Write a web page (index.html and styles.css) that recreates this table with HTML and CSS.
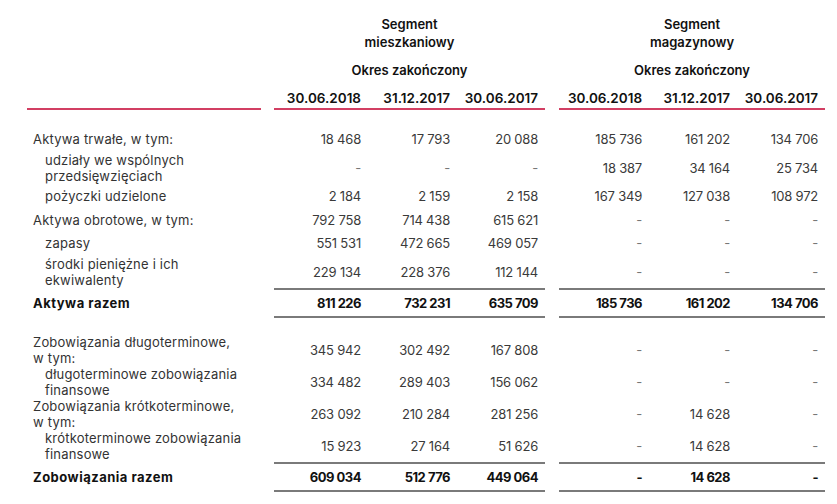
FILE: index.html
```html
<!DOCTYPE html>
<html lang="pl">
<head>
<meta charset="utf-8">
<title>Segmenty</title>
<link rel="stylesheet" href="styles.css">
</head>
<body>
<table class="fin">
  <colgroup>
    <col class="c-label"><col class="c-gap1"><col class="c-n1"><col class="c-n2"><col class="c-n3"><col class="c-gap2"><col class="c-n4"><col class="c-n5"><col class="c-n6">
  </colgroup>
  <thead>
    <tr class="h-seg">
      <th></th><th></th>
      <th colspan="3"><span class="ln">Segment</span><span class="ln">mieszkaniowy</span></th>
      <th></th>
      <th colspan="3"><span class="ln">Segment</span><span class="ln">magazynowy</span></th>
    </tr>
    <tr class="h-okres">
      <th></th><th></th>
      <th colspan="3">Okres zakończony</th>
      <th></th>
      <th colspan="3">Okres zakończony</th>
    </tr>
    <tr class="h-dates">
      <th class="rl"></th><th></th>
      <th class="rl">30.06.2018</th><th class="rl">31.12.2017</th><th class="rl">30.06.2017</th>
      <th></th>
      <th class="rl">30.06.2018</th><th class="rl">31.12.2017</th><th class="rl">30.06.2017</th>
    </tr>
  </thead>
  <tbody>
    <tr class="sp17"><td colspan="9"></td></tr>
    <tr class="s"><td class="lab">Aktywa trwałe, w tym:</td><td></td><td>18 468</td><td>17 793</td><td>20 088</td><td></td><td>185 736</td><td>161 202</td><td>134 706</td></tr>
    <tr class="d"><td class="lab sub"><span class="ln">udziały we wspólnych</span><span class="ln">przedsięwzięciach</span></td><td></td><td class="dash">-</td><td class="dash">-</td><td class="dash">-</td><td></td><td>18 387</td><td>34 164</td><td>25 734</td></tr>
    <tr class="s"><td class="lab sub">pożyczki udzielone</td><td></td><td>2 184</td><td>2 159</td><td>2 158</td><td></td><td>167 349</td><td>127 038</td><td>108 972</td></tr>
    <tr class="s s23"><td class="lab">Aktywa obrotowe, w tym:</td><td></td><td>792 758</td><td>714 438</td><td>615 621</td><td></td><td class="dash">-</td><td class="dash">-</td><td class="dash">-</td></tr>
    <tr class="s"><td class="lab sub">zapasy</td><td></td><td>551 531</td><td>472 665</td><td>469 057</td><td></td><td class="dash">-</td><td class="dash">-</td><td class="dash">-</td></tr>
    <tr class="d"><td class="lab sub"><span class="ln">środki pieniężne i ich</span><span class="ln">ekwiwalenty</span></td><td></td><td>229 134</td><td>228 376</td><td>112 144</td><td></td><td class="dash">-</td><td class="dash">-</td><td class="dash">-</td></tr>
    <tr class="tot"><td class="lab">Aktywa razem</td><td></td><td class="tl">811 226</td><td class="tl">732 231</td><td class="tl">635 709</td><td></td><td class="tl">185 736</td><td class="tl">161 202</td><td class="tl">134 706</td></tr>
    <tr class="sp16"><td colspan="9"></td></tr>
    <tr class="l"><td class="lab"><span class="ln">Zobowiązania długoterminowe,</span><span class="ln">w tym:</span></td><td></td><td>345 942</td><td>302 492</td><td>167 808</td><td></td><td class="dash">-</td><td class="dash">-</td><td class="dash">-</td></tr>
    <tr class="l"><td class="lab sub"><span class="ln">długoterminowe zobowiązania</span><span class="ln">finansowe</span></td><td></td><td>334 482</td><td>289 403</td><td>156 062</td><td></td><td class="dash">-</td><td class="dash">-</td><td class="dash">-</td></tr>
    <tr class="l"><td class="lab"><span class="ln">Zobowiązania krótkoterminowe,</span><span class="ln">w tym:</span></td><td></td><td>263 092</td><td>210 284</td><td>281 256</td><td></td><td class="dash">-</td><td>14 628</td><td class="dash">-</td></tr>
    <tr class="l"><td class="lab sub"><span class="ln">krótkoterminowe zobowiązania</span><span class="ln">finansowe</span></td><td></td><td>15 923</td><td>27 164</td><td>51 626</td><td></td><td class="dash">-</td><td>14 628</td><td class="dash">-</td></tr>
    <tr class="tot"><td class="lab">Zobowiązania razem</td><td></td><td class="tl">609 034</td><td class="tl">512 776</td><td class="tl">449 064</td><td></td><td class="tl">-</td><td class="tl">14 628</td><td class="tl">-</td></tr>
  </tbody>
</table>
</body>
</html>
```

FILE: styles.css
```css
html, body {
  margin: 0;
  padding: 0;
  background: #ffffff;
}

body {
  font-family: Inter, "Open Sans", "Liberation Sans", sans-serif;
  font-size: 13px;
  color: #3a3a3a;
}

.fin {
  margin: 15px 0 0 27px;
  border-collapse: separate;
  border-spacing: 0;
  table-layout: fixed;
  width: 798px;
}

.c-label { width: 234px; }
.c-gap1 { width: 13px; }
.c-n1 { width: 94px; }
.c-n2 { width: 89px; }
.c-n3 { width: 88px; }
.c-gap2 { width: 14px; }
.c-n4 { width: 90px; }
.c-n5 { width: 88px; }
.c-n6 { width: 88px; }

.ln {
  display: block;
  height: 16px;
  line-height: 16px;
}

.fin th,
.fin td {
  padding: 0;
}

.fin th {
  font-weight: 600;
  color: #111;
  text-align: center;
}

.h-seg th {
  padding: 0 0 7px;
  vertical-align: top;
}

.h-seg .ln {
  height: 18px;
  line-height: 18px;
}

.h-okres th {
  height: 24px;
  line-height: 24px;
}

.h-dates th {
  padding: 6px 7px 0 0;
  line-height: 20px;
  text-align: right;
  font-size: 13.5px;
}

.h-dates th.rl {
  border-bottom: 2px solid #d23f63;
}

.sp17 td { height: 17px; }
.sp16 td { height: 16px; }

.fin td {
  text-align: right;
  padding-right: 7px;
  vertical-align: middle;
  white-space: nowrap;
  letter-spacing: -0.2px;
}

.fin td.lab {
  text-align: left;
  padding-left: 6px;
  padding-right: 0;
  line-height: 16px;
  font-size: 13px;
  letter-spacing: 0.2px;
  color: #333;
}

.fin td.sub {
  padding-left: 18px;
}

.s td { height: 24px; }
.s23 td { height: 23px; }
.d td { height: 33px; }
.l td { height: 32px; }

.dash { color: #777; }

.tot td {
  height: 26px;
  font-weight: 700;
  color: #111;
}

.fin .tot td.tl {
  border-top: 2px solid #7a7a7a;
  border-bottom: 2px solid #7a7a7a;
  letter-spacing: -0.5px;
}

.fin .tot td.lab {
  color: #111;
  letter-spacing: 0.5px;
}
```
